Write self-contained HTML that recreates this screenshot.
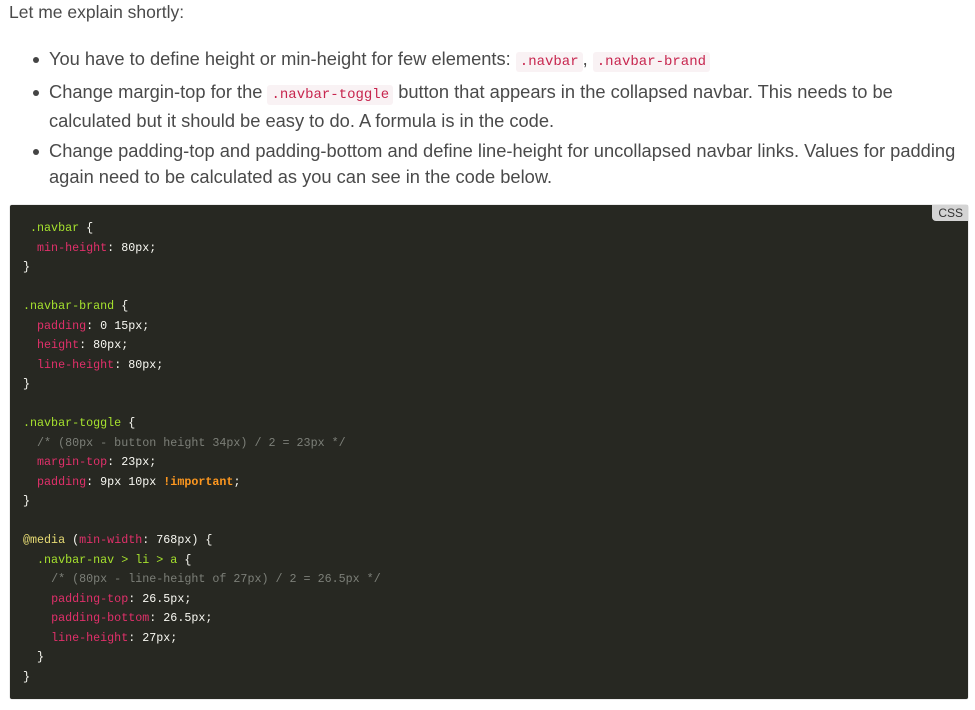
<!DOCTYPE html>
<html><head><meta charset="utf-8"><style>
body{margin:0;background:#fff;width:975px;height:710px;overflow:hidden;font-family:"Liberation Sans",sans-serif;color:#4a4a4a;}
.p{position:absolute;left:9px;top:2px;font-size:17.5px;}
ul{position:absolute;left:0;top:46px;margin:0;padding-left:49px;width:916px;font-size:18.3px;line-height:26px;list-style:none;}
li{position:relative;margin-bottom:4px;}
li:before{content:"";position:absolute;left:-16px;top:11px;width:6px;height:6px;border-radius:50%;background:#444;}
code{font-family:"Liberation Mono",monospace;font-size:14px;color:#c7254e;background:#f9f2f4;padding:2px 4px;border-radius:3px;}
.box{position:absolute;left:10px;top:205px;width:958px;height:494px;background:#272822;border-radius:2px;box-shadow:0 0 1px #888;}
.tag{position:absolute;right:0;top:0;background:#d4d4d4;color:#333;font-size:12px;padding:1px 5px 1px 6px;border-bottom-left-radius:4px;}
pre{position:absolute;left:13px;top:14px;margin:0;font-family:"Liberation Mono",monospace;font-size:11.7px;line-height:19.5px;color:#f8f8f2;}
.s{color:#a6e22e}.k{color:#e0306a}.c{color:#7c7f78}.o{color:#fd971f;font-weight:bold}.y{color:#e6db74}
</style></head><body>
<div class="p">Let me explain shortly:</div>
<ul>
<li>You have to define height or min-height for few elements: <code>.navbar</code>, <code>.navbar-brand</code></li>
<li>Change margin-top for the <code>.navbar-toggle</code> button that appears in the collapsed navbar. This needs to be calculated but it should be easy to do. A formula is in the code.</li>
<li>Change padding-top and padding-bottom and define line-height for uncollapsed navbar links. Values for padding again need to be calculated as you can see in the code below.</li>
</ul>
<div class="box"><div class="tag">CSS</div>
<pre> <span class="s">.navbar</span> {
  <span class="k">min-height</span>: 80px;
}

<span class="s">.navbar-brand</span> {
  <span class="k">padding</span>: 0 15px;
  <span class="k">height</span>: 80px;
  <span class="k">line-height</span>: 80px;
}

<span class="s">.navbar-toggle</span> {
  <span class="c">/* (80px - button height 34px) / 2 = 23px */</span>
  <span class="k">margin-top</span>: 23px;
  <span class="k">padding</span>: 9px 10px <span class="o">!important</span>;
}

<span class="y">@media</span> (<span class="k">min-width</span>: 768px) {
  <span class="s">.navbar-nav &gt; li &gt; a</span> {
    <span class="c">/* (80px - line-height of 27px) / 2 = 26.5px */</span>
    <span class="k">padding-top</span>: 26.5px;
    <span class="k">padding-bottom</span>: 26.5px;
    <span class="k">line-height</span>: 27px;
  }
}</pre></div>
</body></html>
